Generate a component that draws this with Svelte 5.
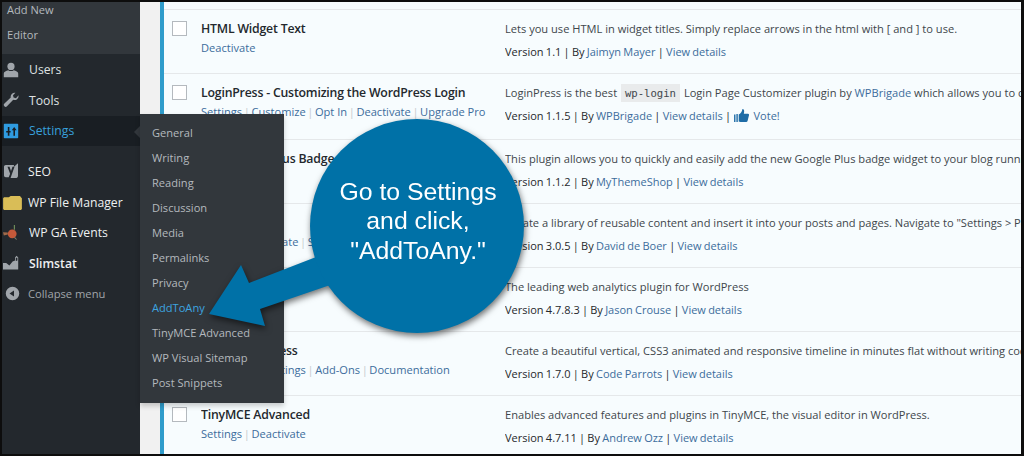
<script>
  const submenu = ['General','Writing','Reading','Discussion','Media','Permalinks','Privacy','AddToAny','TinyMCE Advanced','WP Visual Sitemap','Post Snippets'];
  const plugins = [
    { name:'HTML Widget Text', actions:['Deactivate'], desc:'Lets you use HTML in widget titles. Simply replace arrows in the html with [ and ] to use.', version:'1.1', by:'Jaimyn Mayer' },
    { name:'LoginPress - Customizing the WordPress Login', actions:['Settings','Customize','Opt In','Deactivate','Upgrade Pro'], login:true, version:'1.1.5', by:'WPBrigade', vote:true },
    { name:'MTS Google Plus Badge', actions:['Deactivate'], desc:'This plugin allows you to quickly and easily add the new Google Plus badge widget to your blog running on WordPress.', version:'1.1.2', by:'MyThemeShop' },
    { name:'Post Snippets', actions:['Admin','Deactivate','Snippets'], desc:'Create a library of reusable content and insert it into your posts and pages. Navigate to "Settings > Post Snippets" to get started.', version:'3.0.5', by:'David de Boer' },
    { name:'Slimstat Analytics', actions:['Deactivate'], desc:'The leading web analytics plugin for WordPress', version:'4.7.8.3', by:'Jason Crouse' },
    { name:'Timeline Express', actions:['Deactivate','Settings','Add-Ons','Documentation'], desc:'Create a beautiful vertical, CSS3 animated and responsive timeline in minutes flat without writing code.', version:'1.7.0', by:'Code Parrots' },
    { name:'TinyMCE Advanced', actions:['Settings','Deactivate'], desc:'Enables advanced features and plugins in TinyMCE, the visual editor in WordPress.', version:'4.7.11', by:'Andrew Ozz' }
  ];
</script>

<div class="frame">
  <nav class="sidebar">
    <div class="sub-open">
      <a class="sub-link first">Add New</a>
      <a class="sub-link">Editor</a>
    </div>
    <a class="item">
      <svg viewBox="0 0 20 20"><circle cx="10" cy="5.500" r="4.500"/><path d="M1 19v-4.500c0-2.400 3-3.600 5.500-4.200 2 1.400 5 1.400 7 0 2.500.6 5.500 1.800 5.500 4.200V19z"/></svg>
      <span>Users</span>
    </a>
    <a class="item">
      <svg viewBox="0 0 20 20"><path d="M19.500 4.500a5 5 0 0 1-6.700 5.200L5 17.800a2.300 2.300 0 0 1-3.300-.1 2.300 2.300 0 0 1 .1-3.300l7.900-7.400A5 5 0 0 1 15.500 1l-3 3 .7 3 3 .7 3-3.200z"/></svg>
      <span>Tools</span>
    </a>
    <a class="item current">
      <svg viewBox="0 0 20 20"><path fill-rule="evenodd" d="M2 1h16a1 1 0 0 1 1 1v16a1 1 0 0 1-1 1H2a1 1 0 0 1-1-1V2a1 1 0 0 1 1-1zm4 4v5H4v2h2v4h2v-4h1.500v-2H8V5zm7 11h2V9h2l-3-4-3 4h2z"/></svg>
      <span>Settings</span>
      <i class="pointer"></i>
    </a>
    <div class="separator"></div>
    <a class="item bright">
      <svg class="tall-icon" viewBox="0 0 16 20"><path fill-rule="evenodd" d="M2 3h9.500L11 5.500 16 1v14c0 2-1 3-3 3H7.500l4.500-13H9.700L8 10 6.300 5H4l3 8-1.600 4H2c-1 0-2-1-2-2V5c0-1 1-2 2-2z"/></svg>
      <span>SEO</span>
    </a>
    <a class="item bright">
      <svg class="wide" viewBox="0 0 20 16"><path fill="#d9bd57" d="M0 3.500l1-1h5L8 1h10l1 1.500 1 1V15l-1 1H1l-1-1z"/></svg>
      <span>WP File Manager</span>
    </a>
    <a class="item bright">
      <svg viewBox="0 0 20 20"><path fill="#6d8a5a" d="M13.500 0h1.500v6h-1.500z"/><path fill="#a06a4a" d="M0 9l6 .5v2.500l-5 1z"/><circle cx="11.500" cy="11" r="5.500" fill="#c4593a"/><path fill="#7c7c6a" d="M15 15l2.500 3-1 .5-3-3z"/></svg>
      <span>WP GA Events</span>
    </a>
    <a class="item bright heavy">
      <svg viewBox="0 0 20 20"><path d="M0 10h4l4 3 4-5 3-1V3l2-2 2 2v15H0z"/><path fill="#23282d" d="M16 3.500h2V7l-2 .5z"/></svg>
      <span>Slimstat</span>
    </a>
    <a class="item collapse">
      <svg class="round" viewBox="0 0 20 20"><path fill-rule="evenodd" d="M10 1a9 9 0 1 1 0 18 9 9 0 0 1 0-18zm2 5l-6 4 6 4z"/></svg>
      <span>Collapse menu</span>
    </a>
  </nav>

  <main class="main">
    <div class="table">
      <div class="stub"></div>
      {#each plugins as p}
        <div class="row" class:tall={p.login}>
          <div class="check"><span class="box"></span></div>
          <div class="plugin">
            <strong>{p.name}</strong>
            <div class="actions">
              {#each p.actions as a, i}{#if i}<span class="sep">|</span>{/if}<a>{a}</a>{/each}
            </div>
          </div>
          <div class="info">
            <p class="desc">
              {#if p.login}LoginPress is the best <code>wp-login</code> Login Page Customizer plugin by <a>WPBrigade</a> which allows you to completely change the layout of login, register and forgot password forms.{:else}{p.desc}{/if}
            </p>
            <p class="meta">
              Version {p.version} | By <a>{p.by}</a> | <a>View details</a>{#if p.vote}{' | '}<svg class="thumb" viewBox="0 0 16 14"><path d="M0 6h1.500v8H0zM2.500 5.500h1.500v8.500H2.500zM5 13.500V6c2-1 3.500-3 4-6 1.800 0 2.300 1.800 1.500 5H15c1 0 1.300 1 1 2l-1.500 6c-.2.700-.7 1-1.500 1H7c-1 0-1.500-.2-2-.5z"/></svg>{' '}<a class="vote">Vote!</a>{/if}
            </p>
          </div>
        </div>
      {/each}
    </div>
  </main>

  <ul class="flyout">
    {#each submenu as s}
      <li class:on={s === 'AddToAny'}>{s}</li>
    {/each}
  </ul>

  <div class="callout">
    <svg class="arrow" viewBox="0 0 330 220" width="330" height="220">
      <path d="M0 192L32 143 40 161 120 130 130 160 51 187 56 204z"/>
    </svg>
    <div class="bubble">Go to Settings<br/>and click,<br/>"AddToAny."</div>
  </div>
</div>

<style>
  :global(body) { margin: 0; background: #000; }
  .frame {
    position: relative;
    box-sizing: border-box;
    width: 1024px;
    height: 456px;
    border: 2px solid #0d0d0d;
    border-right-width: 3px;
    display: flex;
    overflow: hidden;
    background: #f1f1f1;
    font-family: "Open Sans", "Noto Sans", sans-serif;
    font-size: 11.100px;
  }
  .sidebar {
    flex: 0 0 138px;
    background: #23282d;
    display: flex;
    flex-direction: column;
    color: #dfe1e2;
  }
  .sub-open {
    height: 52.400px;
    flex: none;
    background: #32373c;
    color: #b4b9be;
    box-sizing: border-box;
    padding: 0 0 0 5px;
  }
  .sub-link { display: block; height: 25px; line-height: 25px; }
  .sub-link.first { margin-top: -5.500px; }
  .item {
    position: relative;
    display: flex;
    align-items: center;
    height: 30.600px;
    flex: none;
    font-size: 12.200px;
  }
  .item svg {
    flex: none;
    width: 16px;
    height: 16px;
    margin: 0 10px 0 1px;
    fill: #a0a5aa;
  }
  .item svg.tall-icon { width: 14px; height: 18px; margin: 0 10px 0 2px; }
  .item svg.wide { width: 19px; height: 15px; margin: 0 6px 0 1px; }
  .item svg.round { width: 15px; height: 15px; margin: 0 8px 0 3px; }
  .current { background: #191e23; color: #38a0dc; }
  .current svg { fill: #2f9be0; }
  .pointer {
    position: absolute;
    right: 0;
    top: 10px;
    border: 6px solid transparent;
    border-left-width: 0;
    border-right-color: #32373c;
  }
  .separator { height: 10px; flex: none; }
  .bright { color: #eef0f1; }
  .heavy { font-weight: 600; }
  .collapse { color: #a0a5aa; font-size: 11.200px; }

  .main { flex: 1; min-width: 0; padding-left: 20px; }
  .table {
    height: 100%;
    border-left: 4px solid #2f9ccb;
    background: #f7fcfe;
    overflow: hidden;
  }
  .stub { height: 7px; border-bottom: 1px solid #e5e8ea; }
  .row {
    display: grid;
    grid-template-columns: 37px 304px minmax(0, 1fr);
    height: 63px;
    border-bottom: 1px solid #e5e8ea;
  }
  .row.tall { height: 65px; }
  .check { padding: 11px 0 0 8px; }
  .box {
    display: block;
    box-sizing: border-box;
    width: 15px;
    height: 15px;
    border: 1px solid #b4b9be;
    background: #fff;
  }
  .plugin { padding-top: 10px; white-space: nowrap; overflow: hidden; }
  .plugin strong {
    display: block;
    font-size: 12.300px;
    letter-spacing: -.2px;
    font-weight: 600;
    line-height: 18px;
    color: #23282d;
  }
  .actions { margin-top: 1px; line-height: 18px; color: #3c6c9c; }
  .sep { color: #c5cacd; margin: 0 1.600px; }
  .info { min-width: 0; overflow: hidden; white-space: nowrap; padding-top: 9px; color: #40464b; }
  .desc { margin: 0; line-height: 19px; height: 19px; }
  .meta { margin: 4px 0 0; line-height: 19px; color: #26292c; font-size: 11px; word-spacing: -.6px; }
  .info a { color: #3c6c9c; }
  code {
    font-family: "DejaVu Sans Mono", "Liberation Mono", monospace;
    font-size: 10.600px;
    background: #e9ebec;
    color: #40464b;
    padding: 3px 4px;
    margin: 0 1px;
  }
  .thumb { width: 15px; height: 13px; fill: #1e6ca6; vertical-align: -2px; margin: 0 1px; }
  .vote { margin-left: 1px; }

  .flyout {
    position: absolute;
    left: 138px;
    top: 112px;
    width: 144px;
    height: 289px;
    box-sizing: border-box;
    margin: 0;
    padding: 6px 0 0 12px;
    list-style: none;
    background: #32373c;
    box-shadow: 0 3px 5px rgba(0,0,0,.2);
    color: #b4b9be;
  }
  .flyout li { height: 25px; line-height: 25px; }
  .flyout li.on { color: #3da5e0; }

  .callout { position: absolute; left: 205px; top: 117px; width: 320px; height: 220px; filter: drop-shadow(1px 3px 3px rgba(0,0,0,.55)); }
  .arrow { position: absolute; left: 2px; top: 2.500px; overflow: visible; fill: #0071a7; }
  .bubble {
    position: absolute;
    left: 103px;
    top: 0;
    width: 214px;
    height: 214px;
    box-sizing: border-box;
    padding: 0 0 10px 2px;
    border-radius: 50%;
    background: #0071a7;
    color: #fff;
    display: flex;
    align-items: center;
    justify-content: center;
    text-align: center;
    font-family: "Liberation Sans", Arial, sans-serif;
    font-size: 24.800px;
    line-height: 29.500px;
  }
</style>
